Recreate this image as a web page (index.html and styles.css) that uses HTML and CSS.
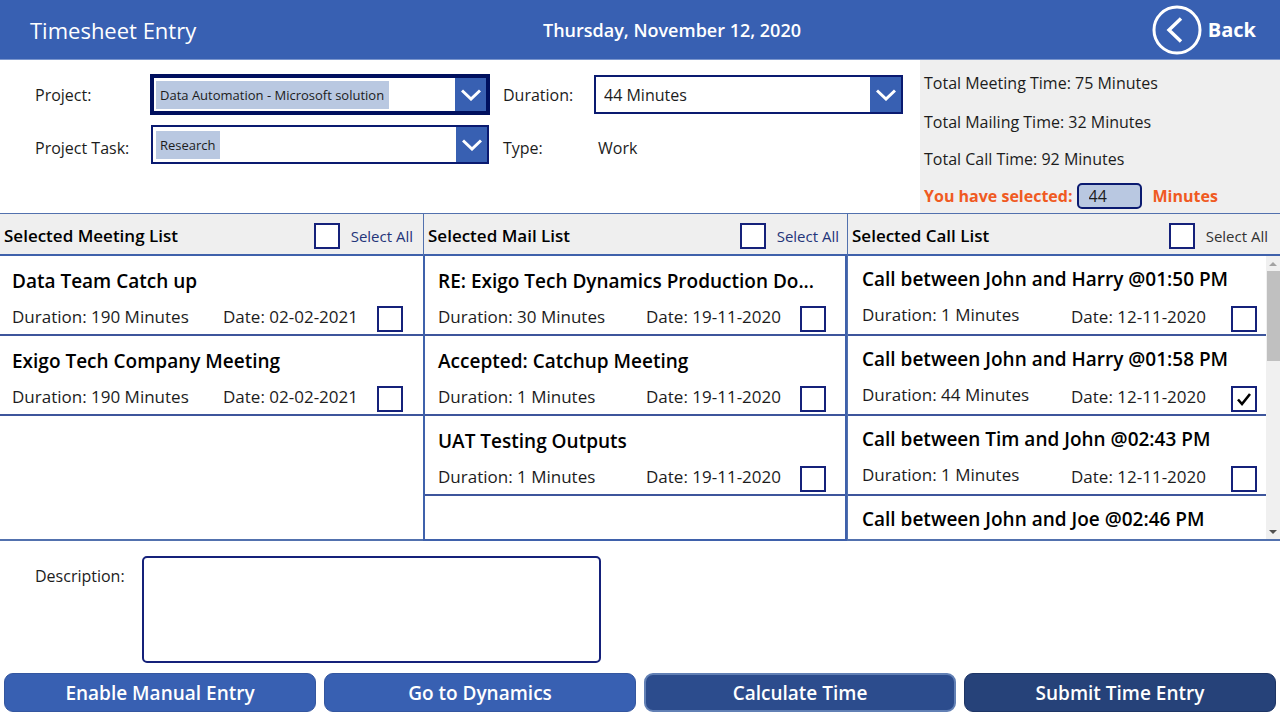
FILE: index.html
```html
<!DOCTYPE html>
<html lang="en">
<head>
    <meta charset="UTF-8">
    <meta name="viewport" content="width=device-width, initial-scale=1.0">
    <title>Timesheet Entry</title>
    <link rel="stylesheet" href="styles.css">
</head>
<body>
    <header class="topbar">
        <h1>Timesheet Entry</h1>
        <p class="today">Thursday, November 12, 2020</p>
        <button class="back" type="button">
            <svg width="50" height="50" viewBox="0 0 50 50" fill="none" stroke="#fff" aria-hidden="true">
                <circle cx="25" cy="25" r="23" stroke-width="3"/>
                <path d="M29 13.5 L17 25 L29 36.5" stroke-width="3.4"/>
            </svg>
            Back
        </button>
    </header>

    <!-- Entry details -->
    <section class="details">
        <div class="form">
            <label for="project">Project:</label>
            <div class="combo focused">
                <select class="chip" id="project">
                    <option>Data Automation - Microsoft solution</option>
                </select>
                <span class="arrow"><svg width="20" height="12" viewBox="0 0 20 12"><path d="M1 1.5 L10 10 L19 1.5"/></svg></span>
            </div>
            <label for="duration">Duration:</label>
            <div class="combo">
                <select class="plain" id="duration">
                    <option>44 Minutes</option>
                </select>
                <span class="arrow"><svg width="20" height="12" viewBox="0 0 20 12"><path d="M1 1.5 L10 10 L19 1.5"/></svg></span>
            </div>

            <label for="task">Project Task:</label>
            <div class="combo">
                <select class="chip" id="task">
                    <option>Research</option>
                </select>
                <span class="arrow"><svg width="20" height="12" viewBox="0 0 20 12"><path d="M1 1.5 L10 10 L19 1.5"/></svg></span>
            </div>
            <span>Type:</span>
            <span class="type-value">Work</span>
        </div>

        <div class="totals">
            <p>Total Meeting Time: 75 Minutes</p>
            <p>Total Mailing Time: 32 Minutes</p>
            <p>Total Call Time: 92 Minutes</p>
            <div class="selected-time">
                <label for="selected">You have selected:</label>
                <input type="text" id="selected" value="44">
                <span>Minutes</span>
            </div>
        </div>
    </section>

    <!-- Meeting, mail and call lists -->
    <main class="lists">
        <section class="list">
            <div class="list-head">
                <h2>Selected Meeting List</h2>
                <input type="checkbox" id="allMeetings">
                <label for="allMeetings">Select All</label>
            </div>
            <div class="list-body">
                <ul>
                    <li>
                        <h3>Data Team Catch up</h3>
                        <label for="meeting1">Duration: 190 Minutes</label>
                        <span class="date">Date: 02-02-2021</span>
                        <input type="checkbox" id="meeting1">
                    </li>
                    <li>
                        <h3>Exigo Tech Company Meeting</h3>
                        <label for="meeting2">Duration: 190 Minutes</label>
                        <span class="date">Date: 02-02-2021</span>
                        <input type="checkbox" id="meeting2">
                    </li>
                </ul>
            </div>
        </section>

        <section class="list mail">
            <div class="list-head">
                <h2>Selected Mail List</h2>
                <input type="checkbox" id="allMails">
                <label for="allMails">Select All</label>
            </div>
            <div class="list-body">
                <ul>
                    <li>
                        <h3>RE: Exigo Tech Dynamics Production Do...</h3>
                        <label for="mail1">Duration: 30 Minutes</label>
                        <span class="date">Date: 19-11-2020</span>
                        <input type="checkbox" id="mail1">
                    </li>
                    <li>
                        <h3>Accepted: Catchup Meeting</h3>
                        <label for="mail2">Duration: 1 Minutes</label>
                        <span class="date">Date: 19-11-2020</span>
                        <input type="checkbox" id="mail2">
                    </li>
                    <li>
                        <h3>UAT Testing Outputs</h3>
                        <label for="mail3">Duration: 1 Minutes</label>
                        <span class="date">Date: 19-11-2020</span>
                        <input type="checkbox" id="mail3">
                    </li>
                </ul>
            </div>
        </section>

        <section class="list call">
            <div class="list-head">
                <h2>Selected Call List</h2>
                <input type="checkbox" id="allCalls">
                <label for="allCalls">Select All</label>
            </div>
            <div class="list-body">
                <ul>
                    <li>
                        <h3>Call between John and Harry @01:50 PM</h3>
                        <label for="call1">Duration: 1 Minutes</label>
                        <span class="date">Date: 12-11-2020</span>
                        <input type="checkbox" id="call1">
                    </li>
                    <li>
                        <h3>Call between John and Harry @01:58 PM</h3>
                        <label for="call2">Duration: 44 Minutes</label>
                        <span class="date">Date: 12-11-2020</span>
                        <input type="checkbox" id="call2" checked>
                    </li>
                    <li>
                        <h3>Call between Tim and John @02:43 PM</h3>
                        <label for="call3">Duration: 1 Minutes</label>
                        <span class="date">Date: 12-11-2020</span>
                        <input type="checkbox" id="call3">
                    </li>
                    <li>
                        <h3>Call between John and Joe @02:46 PM</h3>
                    </li>
                </ul>
                <div class="scrollbar" aria-hidden="true">
                    <svg width="8" height="4" viewBox="0 0 8 4"><path d="M0 4 L4 0 L8 4 Z" fill="#a3a3a3"/></svg>
                    <span class="thumb"></span>
                    <svg width="8" height="4" viewBox="0 0 8 4"><path d="M0 0 L4 4 L8 0 Z" fill="#505050"/></svg>
                </div>
            </div>
        </section>
    </main>

    <section class="description">
        <label for="description">Description:</label>
        <textarea id="description"></textarea>
    </section>

    <footer class="actions">
        <button type="button">Enable Manual Entry</button>
        <button type="button">Go to Dynamics</button>
        <button type="button" class="calculate">Calculate Time</button>
        <button type="button" class="submit">Submit Time Entry</button>
    </footer>
</body>
</html>
```
FILE: styles.css
```css
* {
    box-sizing: border-box;
}

body {
    font-family: "Open Sans", "Noto Sans", sans-serif;
    font-size: 16px;
    line-height: 24px;
    color: #1c1c1c;
    background: white;
    display: flex;
    flex-direction: column;
    height: 100vh;
    margin: 0;
}

h1, h2, h3, p, ul {
    margin: 0;
    padding: 0;
}

input, select, textarea, button {
    font: inherit;
    color: inherit;
    margin: 0;
}

/* Header */
.topbar {
    display: grid;
    grid-template-columns: 1fr auto 1fr;
    align-items: center;
    height: 60px;
    padding: 0 24px 0 30px;
    background: #3860b2;
    border-bottom: 1px solid #7b96cd;
    color: white;
}

.topbar h1 {
    font-size: 22px;
    font-weight: 400;
}

.today {
    font-size: 18px;
    font-weight: 600;
    padding-left: 58px;
}

.back {
    justify-self: end;
    display: flex;
    align-items: center;
    gap: 6px;
    padding: 0;
    background: none;
    border: none;
    font-size: 20px;
    font-weight: 700;
    cursor: pointer;
}

/* Entry details */
.details {
    display: flex;
}

.form {
    flex: 1;
    display: grid;
    grid-template-columns: 102px 338fr 77px 309fr;
    grid-template-rows: 39px 46px;
    gap: 11px 14px;
    align-items: center;
    padding: 15px 17px 0 35px;
}

.combo {
    align-self: start;
    display: flex;
    justify-content: space-between;
    align-items: center;
    height: 39px;
    border: 2px solid #0a1a70;
    background: white;
}

.combo.focused {
    border-color: #00105e;
    box-shadow: 0 0 0 1px #00105e, inset 0 0 0 1px #00105e;
}

.combo select {
    appearance: none;
    border: none;
    border-radius: 0;
    outline: none;
}

.chip {
    height: 28px;
    margin-left: 3px;
    padding: 0 4px;
    background: #b9c8e1;
    font-size: 13px;
}

.combo .plain {
    flex: 1;
    align-self: stretch;
    padding: 0 8px;
    background: white;
}

.arrow {
    display: flex;
    align-items: center;
    justify-content: center;
    align-self: stretch;
    width: 31px;
    background: #3860b2;
}

.focused .arrow {
    margin: 1px 1px 1px 0;
}

.arrow path {
    fill: none;
    stroke: white;
    stroke-width: 3;
}

.type-value {
    padding-left: 4px;
}

.totals {
    display: grid;
    grid-template-rows: 45px 34px 39px 35px;
    align-items: center;
    width: 360px;
    padding-left: 4px;
    background: #efefef;
}

.selected-time {
    display: flex;
    align-items: center;
    color: #f05a22;
    font-weight: 700;
}

.selected-time input {
    width: 65px;
    height: 26px;
    margin: 0 11px 0 4px;
    padding: 0 10px;
    border: 2px solid #0a1a70;
    border-radius: 5px;
    background: #b9c8e1;
    color: #1c1c1c;
    font-weight: 400;
}

/* Lists */
.lists {
    flex: 1;
    min-height: 0;
    display: grid;
    grid-template-columns: 423fr 424fr 433fr;
    grid-template-rows: minmax(0, 1fr);
    border-top: 1px solid #5271ae;
}

.list {
    display: flex;
    flex-direction: column;
    min-width: 0;
}

.list + .list {
    border-left: 1px solid #5271ae;
}

.list-head {
    display: flex;
    align-items: center;
    height: 42px;
    padding: 4px 10px 0 4px;
    background: #efefef;
    border-bottom: 2px solid #3f61ab;
    color: #24357a;
    font-size: 15px;
}

.list-head h2 {
    flex: 1;
    color: black;
    font-size: 17px;
    font-weight: 600;
}

.list-head input {
    margin-right: 11px;
}

.mail .list-head {
    padding-right: 8px;
}

.call .list-head {
    padding-right: 12px;
    color: #333;
}

input[type="checkbox"] {
    appearance: none;
    flex: none;
    width: 26px;
    height: 26px;
    border: 2px solid #15217a;
    background: white;
}

input[type="checkbox"]:checked {
    background: white url("data:image/svg+xml,%3Csvg xmlns='http://www.w3.org/2000/svg' viewBox='0 0 22 22'%3E%3Cpath d='M5 11.5 L9 16 L17 6' fill='none' stroke='black' stroke-width='2.6'/%3E%3C/svg%3E") center / 22px 22px no-repeat;
}

.list-body {
    flex: 1;
    min-height: 0;
    display: flex;
    overflow: hidden;
    border-bottom: 2px solid #5271ae;
}

.mail .list-body {
    margin-left: -1px;
    border: 2px solid #3f61ab;
    border-top: none;
}

.list-body ul {
    flex: 1;
    min-width: 0;
    list-style: none;
}

.list li {
    display: grid;
    grid-template-columns: 1fr auto auto;
    grid-template-rows: 50px 28px;
    height: 80px;
    padding: 0 20px 0 12px;
    border-bottom: 2px solid #3d559c;
    font-size: 17px;
}

.list h3 {
    grid-column: 1 / -1;
    color: black;
    font-size: 19px;
    font-weight: 600;
    line-height: 50px;
    white-space: nowrap;
}

.list li label,
.list .date {
    line-height: 22px;
}

.list .date {
    margin-right: 19px;
}

.mail li {
    padding-left: 13px;
    padding-right: 19px;
}

.call li {
    padding-left: 14px;
    padding-right: 9px;
}

.call h3 {
    line-height: 47px;
}

.call li label {
    line-height: 18px;
}

.call .date {
    margin-right: 25px;
}

.scrollbar {
    display: flex;
    flex-direction: column;
    align-items: center;
    width: 14px;
    padding: 6px 0 5px;
    background: #f0f0f0;
}

.thumb {
    width: 13px;
    height: 90px;
    margin: 5px 0 auto;
    background: #c0c0c0;
}

/* Description */
.description {
    display: flex;
    gap: 17px;
    padding: 15px 35px 10px;
}

.description label {
    padding-top: 8px;
}

.description textarea {
    width: 38%;
    height: 107px;
    padding: 8px;
    border: 2px solid #15217a;
    border-radius: 5px;
    resize: none;
}

/* Buttons */
.actions {
    display: grid;
    grid-template-columns: repeat(4, 1fr);
    gap: 8px;
    padding: 0 4px 8px;
}

.actions button {
    height: 39px;
    padding: 0;
    border: 1px solid #34569f;
    border-radius: 9px;
    background: #3860b2;
    color: white;
    font-size: 19px;
    font-weight: 600;
    cursor: pointer;
}

.actions .calculate {
    background: #2c4c8d;
    border: 2px solid #6280b5;
}

.actions .submit {
    background: #264279;
    border-color: #1e3565;
}
```
